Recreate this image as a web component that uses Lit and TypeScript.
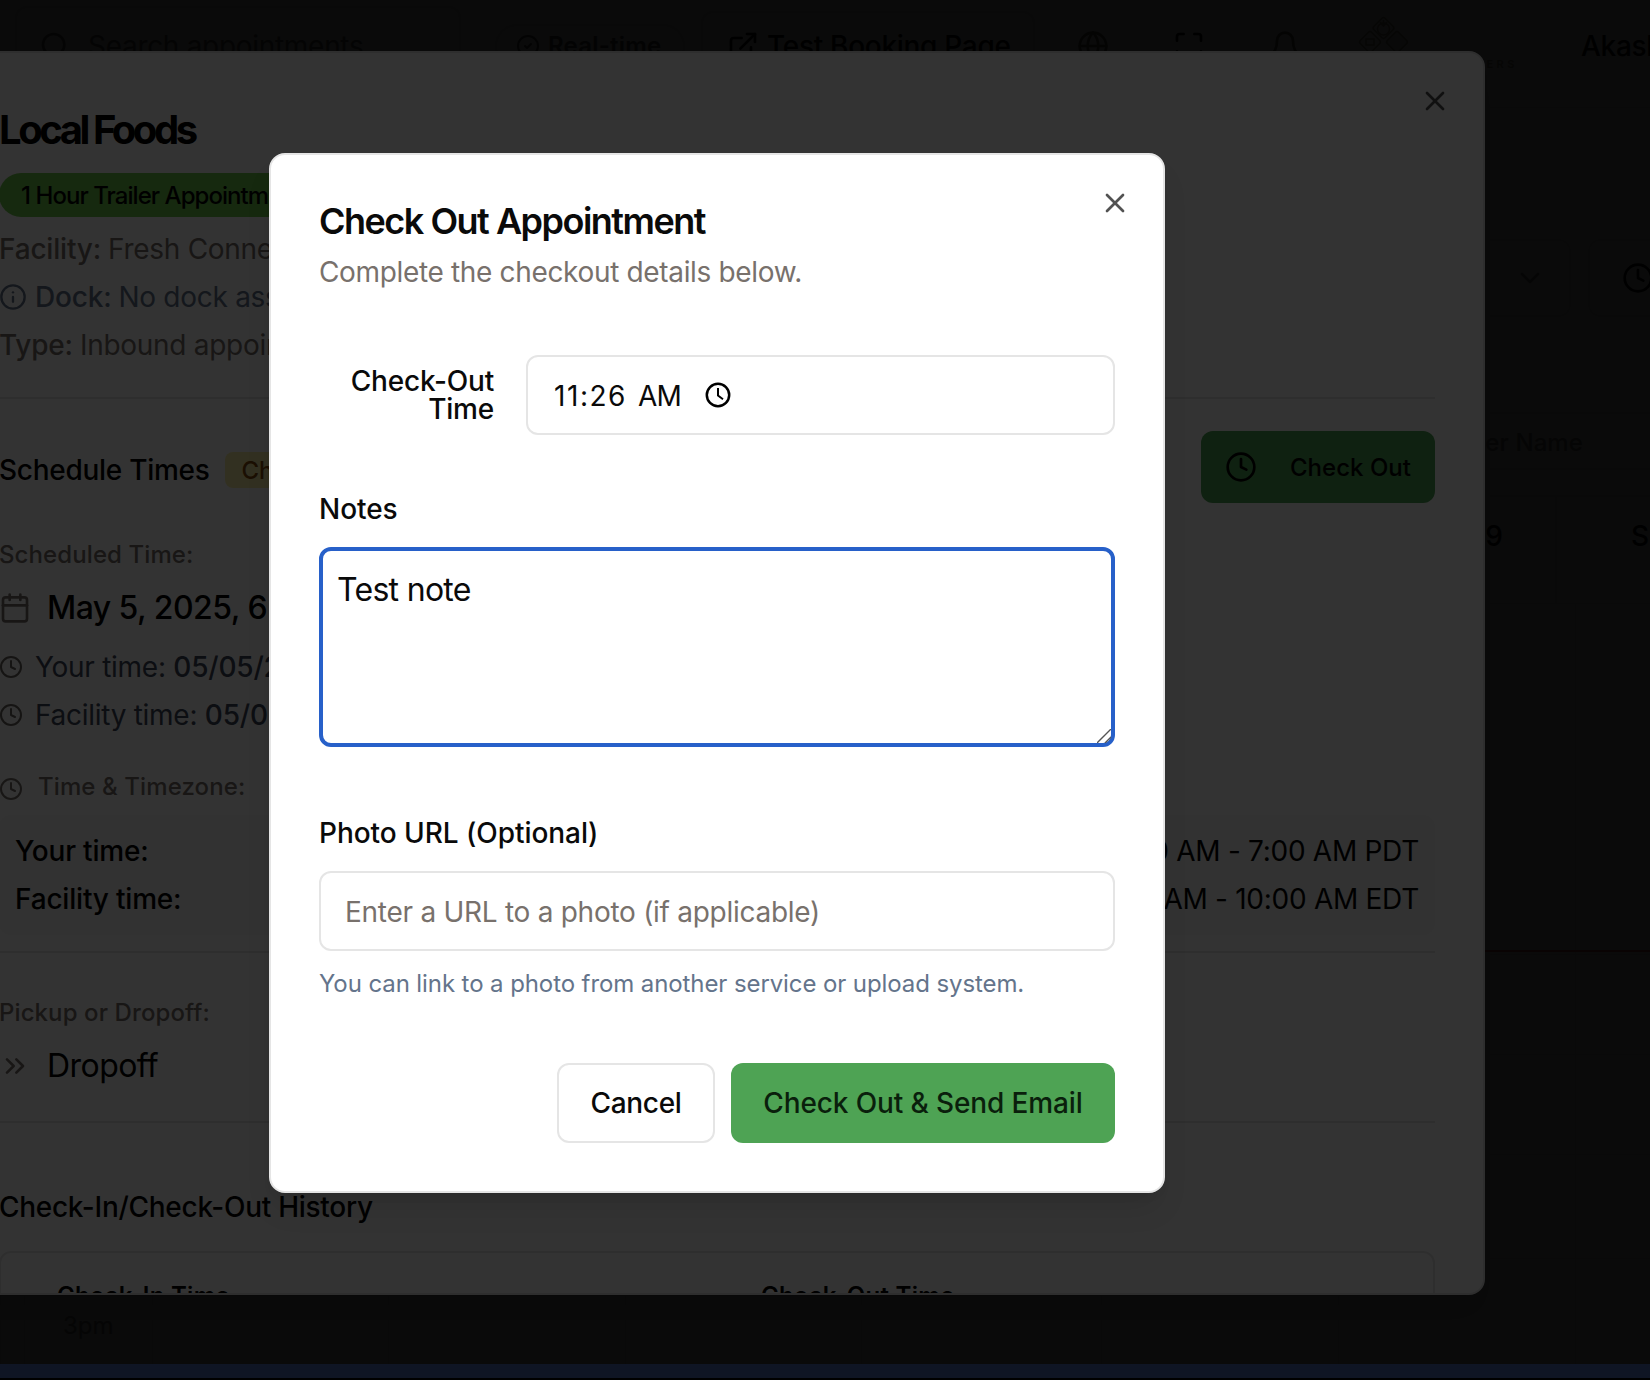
import { LitElement, html, css, svg } from "lit";
import { customElement } from "lit/decorators.js";

const paths = {
  x: svg`<path d="M18 6 6 18"/><path d="m6 6 12 12"/>`,
  clock: svg`<circle cx="12" cy="12" r="10"/><path d="M12 6v6l4 2"/>`,
  info: svg`<circle cx="12" cy="12" r="10"/><path d="M12 16v-4"/><path d="M12 8h.01"/>`,
  calendar: svg`<path d="M8 2v4"/><path d="M16 2v4"/><rect width="18" height="18" x="3" y="4" rx="2"/><path d="M3 10h18"/>`,
  chevrons: svg`<path d="m6 17 5-5-5-5"/><path d="m13 17 5-5-5-5"/>`,
  chevron: svg`<path d="m6 9 6 6 6-6"/>`,
  search: svg`<circle cx="11" cy="11" r="8"/><path d="m21 21-4.3-4.3"/>`,
  check: svg`<circle cx="12" cy="12" r="10"/><path d="m9 12 2 2 4-4"/>`,
  external: svg`<path d="M15 3h6v6"/><path d="M10 14 21 3"/><path d="M18 13v6a2 2 0 0 1-2 2H5a2 2 0 0 1-2-2V8a2 2 0 0 1 2-2h6"/>`,
  globe: svg`<circle cx="12" cy="12" r="10"/><path d="M12 2a14.5 14.5 0 0 0 0 20 14.5 14.5 0 0 0 0-20"/><path d="M2 12h20"/>`,
  maximize: svg`<path d="M8 3H5a2 2 0 0 0-2 2v3"/><path d="M21 8V5a2 2 0 0 0-2-2h-3"/><path d="M3 16v3a2 2 0 0 0 2 2h3"/><path d="M16 21h3a2 2 0 0 0 2-2v-3"/>`,
  bell: svg`<path d="M6 8a6 6 0 0 1 12 0c0 7 3 9 3 9H3s3-2 3-9"/><path d="M10.3 21a1.94 1.94 0 0 0 3.4 0"/>`,
};

const icon = (name: keyof typeof paths, size = 32, stroke = 2) => html`<svg
  width=${size} height=${size} viewBox="0 0 24 24" fill="none" stroke="currentColor"
  stroke-width=${stroke} stroke-linecap="round" stroke-linejoin="round">${paths[name]}</svg>`;

const base = css`
  :host { display: block; }
  * { box-sizing: border-box; }
  svg { display: block; flex: none; }
`;

@customElement("schedule-page")
class SchedulePage extends LitElement {
  static styles = [base, css`
    :host { width: 1650px; height: 1380px; background: #fff; color: #0a0a0a; }
    .page { display: flex; flex-direction: column; height: 1380px; }
    header { display: flex; align-items: center; height: 108px; padding: 0 0 16px 15px; border-bottom: 1px solid #f0f0f0; flex: none; overflow: hidden; }
    header > * { flex: none; }
    .search { width: 446px; height: 80px; border: 2px solid #e5e5e5; border-radius: 12px; display: flex; align-items: center; gap: 17px; padding-left: 22px; color: #78716c; letter-spacing: -.3px; }
    .badge { margin-left: 34px; width: 190px; height: 44px; border: 2px solid #e5e5e5; border-radius: 22px; display: flex; align-items: center; gap: 8px; padding-left: 19px; font-size: 24px; font-weight: 600; color: #555; letter-spacing: .2px; }
    .booking { margin-left: 16px; width: 334px; height: 70px; border: 2px solid #e5e5e5; border-radius: 12px; display: flex; align-items: center; gap: 8px; padding-left: 24px; font-weight: 500; letter-spacing: -.3px; }
    .ic1 { margin-left: 42px; color: #6b6560; }
    .ic2 { margin-left: 64px; }
    .ic3 { margin-left: 64px; color: #6b6560; }
    .logo { margin-left: 54px; width: 160px; height: 70px; display: flex; flex-direction: column; align-self: flex-start; padding-top: 14px; color: #a89b7c; }
    .mark { display: block; }
    .brand { align-self: flex-end; font-size: 11px; line-height: 12px; letter-spacing: .32em; font-weight: 600; margin: -10px -3px 0 0; }
    .user { margin-left: 66px; font-weight: 500; white-space: nowrap; letter-spacing: -.3px; }
    .filters { display: flex; justify-content: flex-end; gap: 17px; height: 306px; padding-top: 131px; border-bottom: 2px solid #f0f0f0; }
    .select { width: 400px; height: 78px; border: 2px solid #f5f5f5; border-radius: 12px; display: flex; align-items: center; justify-content: flex-end; padding-right: 23px; color: #8f8984; }
    .range { width: 62px; height: 78px; border: 2px solid #f5f5f5; border-right: 0; border-radius: 12px 0 0 12px; display: flex; align-items: center; padding-left: 32px; }
    .thead { display: flex; justify-content: flex-end; align-items: center; height: 56px; padding: 4px 67px 0 0; border-bottom: 2px solid #f0f0f0; font-size: 24px; font-weight: 500; letter-spacing: .1px; color: #8a8480; }
    .trow { display: flex; justify-content: flex-end; height: 108px; margin-top: 25px; border-top: 2px solid #f0f0f0; font-weight: 500; }
    .cell { border-right: 2px solid #f0f0f0; padding: 19px 52px 0 0; width: 160px; text-align: right; }
    .cell.last { width: 93px; border: 0; padding: 19px 0 0 74px; text-align: left; white-space: nowrap; }
    .cal { flex: 1; display: grid; grid-template-columns: 24px 128px 236px 237px 236px 240px 237px 237px 75px; grid-template-rows: 351px 100px 100px 104px 1fr; }
    .cal span { border-left: 1px solid #f0f0f0; border-top: 1px solid #f0f0f0; }
    .cal .hour { font-size: 24px; color: #8a8480; padding: 47px 0 0 38px; }
    .now { position: absolute; left: 0; right: 0; top: 950px; height: 2px; background: #ef4444; opacity: .9; }
  `];
  render() {
    return html`<div class="page">
      <header>
        <div class="search">${icon("search")}<span>Search appointments</span></div>
        <div class="badge">${icon("check", 24)}<span>Real-time</span></div>
        <div class="booking">${icon("external")}<span>Test Booking Page</span></div>
        <div class="ic1">${icon("globe")}</div>
        <div class="ic2">${icon("maximize")}</div>
        <div class="ic3">${icon("bell")}</div>
        <div class="logo">
          <svg class="mark" width="58" height="54" viewBox="0 0 58 54" fill="none" stroke="currentColor" stroke-width="1.5">
            <rect x="20.5" y="6" width="16" height="16" rx="2.5" transform="rotate(45 28.5 14)"/>
            <rect x="7" y="20" width="16" height="16" rx="2.5" transform="rotate(45 15 28)"/>
            <rect x="34" y="20" width="16" height="16" rx="2.5" transform="rotate(45 42 28)" fill="currentColor" fill-opacity=".25"/>
            <circle cx="28.5" cy="15" r="6"/>
            <path d="M25 8l3.5 4L32 8M28.5 6v6M11 25h8v6h-8z"/>
          </svg>
          <span class="brand">ERS</span>
        </div>
        <div class="user">Akash</div>
      </header>
      <div class="filters">
        <div class="select">${icon("chevron")}</div>
        <div class="range">${icon("clock")}</div>
      </div>
      <div class="thead">er Name</div>
      <div class="trow"><div class="cell">9</div><div class="cell last">S.</div></div>
      <div class="cal">
        ${Array.from({ length: 45 }, (_, i) => html`<span class=${i === 37 ? "hour" : ""}>${i === 37 ? "3pm" : ""}</span>`)}
      </div>
      <div class="now"></div>
    </div>`;
  }
}

@customElement("appointment-panel")
class AppointmentPanel extends LitElement {
  static styles = [base, css`
    :host { color: #020202; }
    .panel { width: 1536px; height: 1244px; background: #fff; border: 2px solid #e5e5e5; border-radius: 16px; padding: 48px 48px 0; overflow: hidden; box-shadow: 0 20px 30px -6px rgba(0,0,0,.1), 0 8px 12px -8px rgba(0,0,0,.1); display: flex; flex-direction: column; letter-spacing: -.28px; }
    .panel > * { flex: none; }
    h1 { margin: 0; font-size: 40px; line-height: 58px; font-weight: 700; letter-spacing: -3.45px; }
    .tag { align-self: flex-start; margin-top: 14px; height: 44px; border-radius: 22px; background: #70cb4e; padding: 0 22px; font-size: 24px; line-height: 46px; font-weight: 500; letter-spacing: -.95px; white-space: nowrap; }
    .meta { margin-top: 8px; color: #78716c; line-height: 49px; height: 144px; }
    .meta div { display: flex; align-items: center; gap: 8px; height: 48px; }
    .meta .dock { color: #64748b; }
    b { font-weight: 500; letter-spacing: -.2px; }
    .meta b { margin-right: -1px; }
    .rule { height: 2px; background: #e5e5e5; }
    .r1 { margin-top: 28px; }
    .sched { display: flex; margin-top: 32px; height: 72px; align-items: center; }
    .sched h2, .history { margin: 0; font-size: 28px; font-weight: 500; line-height: 40px; }
    .sched h2 { margin-top: 5px; }
    .state { margin: 6px 0 0 16px; height: 36px; line-height: 37px; padding: 0 16px; border-radius: 8px; background: #fbf1a6; color: #854d0e; font-size: 24px; font-weight: 500; letter-spacing: 0; }
    .out { margin-left: auto; width: 234px; height: 72px; border-radius: 12px; background: #4ea354; display: flex; align-items: center; justify-content: space-between; padding: 0 24px; font-size: 24px; font-weight: 500; letter-spacing: .02px; white-space: nowrap; }
    .out span { padding-top: 2px; }
    .sub { font-size: 24px; line-height: 32px; font-weight: 500; color: #78716c; letter-spacing: .1px; }
    .s1 { margin-top: 36px; }
    .big { display: flex; align-items: center; gap: 16px; font-size: 32px; line-height: 48px; font-weight: 500; letter-spacing: -.55px; margin-top: 13px; white-space: nowrap; }
    .big svg { color: #78716c; }
    .big.reg { font-weight: 400; }
    .times { margin-top: 11px; color: #3f4859; line-height: 48px; }
    .times div { display: flex; align-items: center; gap: 12px; }
    .times div { white-space: pre; }
    .times svg { color: #6b6560; }
    .zone { display: flex; gap: 15px; margin-top: 32px; }
    .zone svg { margin-top: 6px; color: #78716c; }
    .box { margin-top: 12px; height: 120px; border-radius: 12px; background: #f8f8f7; padding: 12px 16px; line-height: 49px; }
    .box div { display: flex; justify-content: space-between; height: 48px; }
    .r2 { margin-top: 16px; }
    .s2 { margin-top: 44px; }
    .drop { margin-top: 13px; }
    .r3 { margin-top: 31px; }
    .history { margin-top: 64px; }
    .card { margin-top: 24px; border: 2px solid #e5e5e5; border-radius: 12px; height: 200px; display: flex; padding: 27px 0 0 56px; font-size: 24px; line-height: 32px; font-weight: 600; letter-spacing: .28px; }
    .card span { width: 704px; flex: none; }
  `];
  render() {
    return html`<div class="panel">
      <h1>Local Foods</h1>
      <span class="tag">1 Hour Trailer Appointment</span>
      <div class="meta">
        <div><b>Facility:</b><span>Fresh Connect</span></div>
        <div class="dock">${icon("info", 28)}<b>Dock:</b><span>No dock assigned</span></div>
        <div><b>Type:</b><span>Inbound appointment</span></div>
      </div>
      <div class="rule r1"></div>
      <div class="sched">
        <h2>Schedule Times</h2><span class="state">Checked In</span>
        <div class="out">${icon("clock")}<span>Check Out</span></div>
      </div>
      <div class="sub s1">Scheduled Time:</div>
      <div class="big">${icon("calendar")}<span>May 5, 2025, 6:00 AM</span></div>
      <div class="times">
        <div>${icon("clock", 24)}<span>Your time: <b>05/05/2025</b></span></div>
        <div>${icon("clock", 24)}<span>Facility time: <b>05/05/2025</b></span></div>
      </div>
      <div class="sub zone">${icon("clock", 24)}<span>Time &amp; Timezone:</span></div>
      <div class="box">
        <div><b>Your time:</b><span>6:00 AM - 7:00 AM PDT</span></div>
        <div><b>Facility time:</b><span>9:00 AM - 10:00 AM EDT</span></div>
      </div>
      <div class="rule r2"></div>
      <div class="sub s2">Pickup or Dropoff:</div>
      <div class="big reg drop">${icon("chevrons")}<span>Dropoff</span></div>
      <div class="rule r3"></div>
      <h2 class="history">Check-In/Check-Out History</h2>
      <div class="card"><span>Check-In Time</span><span>Check-Out Time</span></div>
    </div>`;
  }
}

@customElement("checkout-dialog")
class CheckoutDialog extends LitElement {
  static styles = [base, css`
    :host { color: #0a0a0a; }
    .dialog { width: 896px; height: 1040px; background: #fff; border: 2px solid #e5e5e5; border-radius: 16px; padding: 48px; box-shadow: 0 20px 30px -6px rgba(0,0,0,.1), 0 8px 12px -8px rgba(0,0,0,.1); display: flex; flex-direction: column; letter-spacing: -.34px; }
    h2 { margin: 0; font-size: 36px; line-height: 36px; font-weight: 600; letter-spacing: -1.5px; }
    p { margin: 13px 0 0; line-height: 40px; color: #78716c; }
    .row { display: grid; grid-template-columns: repeat(4, 1fr); column-gap: 32px; align-items: center; margin-top: 63px; }
    .row label { text-align: right; letter-spacing: -.2px; }
    label { font-weight: 500; line-height: 28px; letter-spacing: -.05px; }
    .field { height: 80px; border: 2px solid #e5e5e5; border-radius: 12px; display: flex; align-items: center; padding: 0 24px; }
    .time { grid-column: span 3; padding-left: 26px; padding-top: 1px; }
    .time .hm { width: 73px; letter-spacing: 1.55px; }
    .time .ap { margin-left: 11px; letter-spacing: -.9px; }
    .time svg { margin-left: 23px; margin-top: -2px; }
    .l1 { margin-top: 60px; }
    .l2 { margin-top: 72px; }
    .area { margin-top: 24px; height: 200px; border: 4px solid #2760c9; border-radius: 12px; padding: 15px 14px 14px; font-size: 32px; line-height: 48px; letter-spacing: -.7px; display: flex; justify-content: space-between; }
    .grip { align-self: flex-end; margin: 0 -14px -14px 0; }
    .ph { margin-top: 24px; color: #78716c; padding-top: 2px; letter-spacing: -.27px; }
    .help { margin-top: 17px; font-size: 24px; line-height: 32px; color: #64748b; letter-spacing: -.095px; }
    .foot { display: flex; justify-content: flex-end; gap: 16px; margin-top: 63px; font-weight: 500; letter-spacing: -.12px; }
    .btn { height: 80px; border-radius: 12px; display: flex; align-items: center; justify-content: center; white-space: nowrap; }
    .cancel { width: 158px; border: 2px solid #e5e5e5; letter-spacing: -.3px; }
    .send { width: 384px; background: #4ea354; color: #0a1f0c; }
  `];
  render() {
    return html`<div class="dialog">
      <h2>Check Out Appointment</h2>
      <p>Complete the checkout details below.</p>
      <div class="row">
        <label>Check-Out Time</label>
        <div class="field time"><span class="hm">11:26</span><span class="ap">AM</span>
          <svg width="28" height="28" viewBox="0 0 28 28" fill="none" stroke="#000" stroke-width="2.5"><circle cx="14" cy="14" r="11.2"/><path d="M14 7v7.6l5 3.6" stroke-width="2"/></svg>
        </div>
      </div>
      <label class="l1">Notes</label>
      <div class="area"><span>Test note</span>
        <svg class="grip" width="14" height="14" viewBox="0 0 14 14" fill="none" stroke="#555" stroke-width="1.4"><path d="M0 14 14 0M8 14l6-6"/></svg>
      </div>
      <label class="l2">Photo URL (Optional)</label>
      <div class="field ph">Enter a URL to a photo (if applicable)</div>
      <div class="help">You can link to a photo from another service or upload system.</div>
      <div class="foot"><div class="btn cancel">Cancel</div><div class="btn send">Check Out &amp; Send Email</div></div>
    </div>`;
  }
}

@customElement("close-button")
class CloseButton extends LitElement {
  static styles = [base, css`:host { width: 32px; height: 32px; color: #0a0a0a; opacity: .7; }`];
  render() { return icon("x"); }
}

@customElement("app-root")
class AppRoot extends LitElement {
  static styles = [base, css`
    :host { position: relative; width: 1650px; height: 1380px; overflow: hidden; font-family: Inter, "Liberation Sans", sans-serif; font-size: 28px; line-height: 40px; }
    .shade { position: absolute; inset: 0; background: rgba(0,0,0,.8); }
    appointment-panel { position: absolute; left: -51px; top: 51px; }
    checkout-dialog { position: absolute; left: 269px; top: 153px; }
    .c1 { position: absolute; left: 1419px; top: 85px; }
    .c2 { position: absolute; left: 1099px; top: 187px; }
    .dock { position: absolute; left: 0; right: 0; bottom: 0; height: 16px; background: #0f1524; border-bottom: 2px solid #000; }
  `];
  render() {
    return html`
      <schedule-page></schedule-page>
      <div class="shade"></div>
      <appointment-panel></appointment-panel>
      <close-button class="c1"></close-button>
      <div class="shade"></div>
      <div class="dock"></div>
      <checkout-dialog></checkout-dialog>
      <close-button class="c2"></close-button>`;
  }
}
